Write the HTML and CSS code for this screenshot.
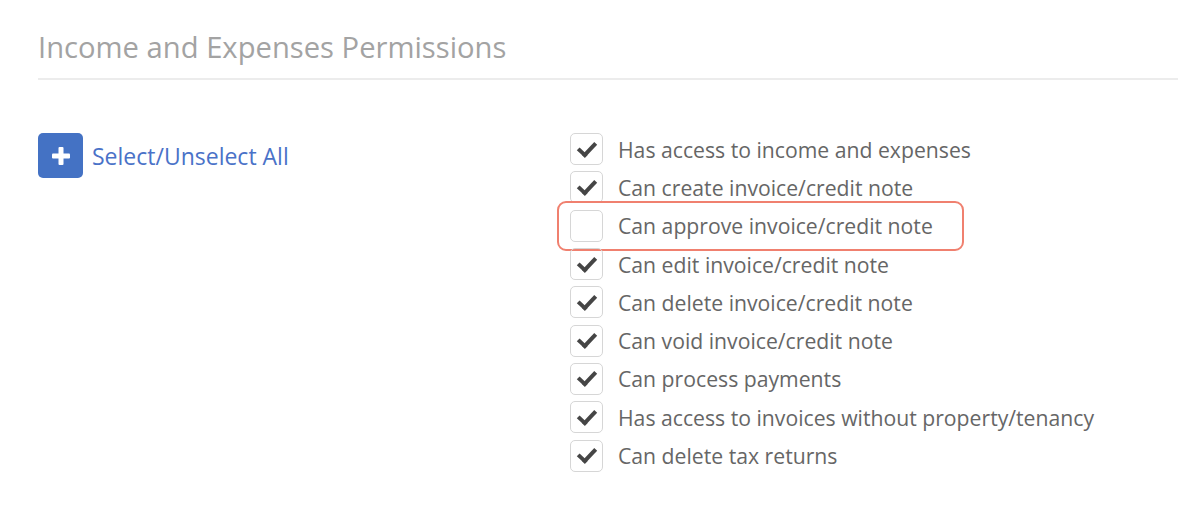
FILE: index.html
```html
<!DOCTYPE html>
<html lang="en">
<head>
  <meta charset="UTF-8">
  <meta name="viewport" content="width=device-width, initial-scale=1.0">
  <title>Income and Expenses Permissions</title>
  <link rel="stylesheet" href="styles.css">
</head>
<body>

<div class="section">
  <h2 class="section-title">Income and Expenses Permissions</h2>

  <div class="permissions">
    <div class="select-all">
      <button class="plus-btn" type="button">
        <svg width="20" height="20" viewBox="0 0 20 20">
          <rect x="7.5" y="1" width="5" height="18" rx="1" fill="#fff"/>
          <rect x="1" y="7.5" width="18" height="5" rx="1" fill="#fff"/>
        </svg>
      </button>
      <a href="#" class="select-link">Select/Unselect All</a>
    </div>

    <ul class="perm-list">
      <li class="perm checked"><span class="box"></span>Has access to income and expenses</li>
      <li class="perm checked"><span class="box"></span>Can create invoice/credit note</li>
      <li class="perm highlight"><span class="box"></span>Can approve invoice/credit note</li>
      <li class="perm checked"><span class="box"></span>Can edit invoice/credit note</li>
      <li class="perm checked"><span class="box"></span>Can delete invoice/credit note</li>
      <li class="perm checked"><span class="box"></span>Can void invoice/credit note</li>
      <li class="perm checked"><span class="box"></span>Can process payments</li>
      <li class="perm checked"><span class="box"></span>Has access to invoices without property/tenancy</li>
      <li class="perm checked"><span class="box"></span>Can delete tax returns</li>
    </ul>
  </div>
</div>

</body>
</html>
```

FILE: styles.css
```css
body {
  margin: 0;
  font-family: "Open Sans", Arial, sans-serif;
  background-color: #fff;
}

.section {
  padding: 28px 1px 0 38px;
}

.section-title {
  margin: 0;
  padding-bottom: 12px;
  font-size: 29.2px;
  font-weight: normal;
  color: #a3a3a3;
  border-bottom: 2px solid #ececec;
  line-height: 38px;
}

.permissions {
  display: flex;
  padding-top: 50px;
}

.select-all {
  width: 532px;
  display: flex;
  align-items: center;
  gap: 9px;
  align-self: flex-start;
  margin-top: 3px;
}

.plus-btn {
  width: 45px;
  height: 45px;
  border: none;
  border-radius: 5px;
  background-color: #4472c4;
  display: flex;
  align-items: center;
  justify-content: center;
  padding: 0;
}

.select-link {
  color: #4a72c8;
  text-decoration: none;
  font-size: 23px;
}

.perm-list {
  list-style: none;
  margin: 0;
  padding: 0;
}

.perm {
  display: flex;
  align-items: center;
  gap: 15px;
  width: fit-content;
  height: 38.3px;
  font-size: 21.2px;
  color: #666;
  position: relative;
}

.box {
  width: 33px;
  height: 32px;
  border: 1.5px solid #d6d6d6;
  border-radius: 5px;
  box-sizing: border-box;
  display: flex;
  align-items: center;
  justify-content: center;
}

.checked .box::after {
  content: "";
  width: 14px;
  height: 7px;
  border-left: 4.5px solid #454545;
  border-bottom: 4.5px solid #454545;
  transform: rotate(-47deg);
  margin-top: -4px;
}

.highlight::before {
  content: "";
  position: absolute;
  left: -13px;
  right: -31px;
  top: -6px;
  bottom: -6px;
  border: 2px solid #f0806f;
  border-radius: 9px;
}
```
